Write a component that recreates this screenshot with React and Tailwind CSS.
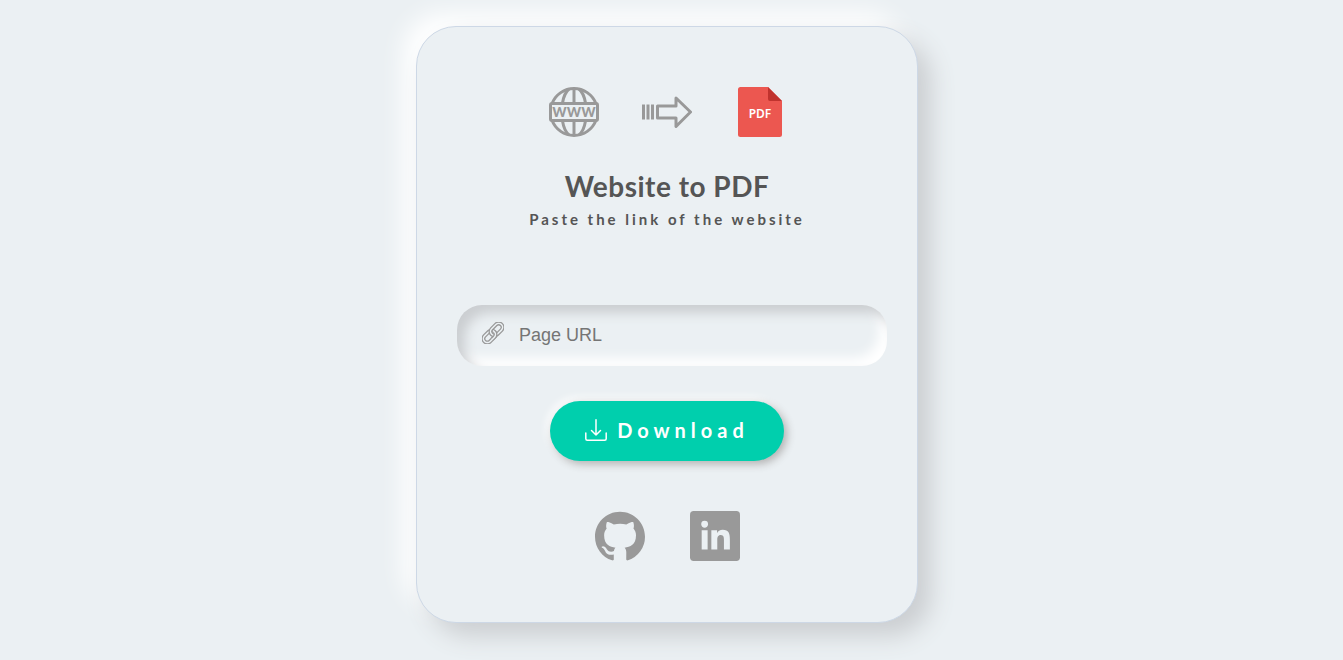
function GlobeIcon() {
  return (
    <svg viewBox="0 0 50 50" className="size-[50px]" fill="none" stroke="#999" strokeWidth="3" aria-hidden="true">
      <path d="M3.100 16.500A23.500 23.500 0 0 1 46.900 16.500M3.100 33.500A23.500 23.500 0 0 0 46.900 33.500" />
      <path d="M25 1.500V16M25 34V48.500M13.500 16C14.500 10 17 4.500 20 2M36.500 16C35.500 10 33 4.500 30 2M13.500 34C14.500 40 17 45.500 20 48M36.500 34C35.500 40 33 45.500 30 48" />
      <rect x="1.500" y="16.500" width="47" height="17" rx="1.500" />
      <text x="25" y="29.500" textAnchor="middle" fill="#999" stroke="none" className="font-[Lato,sans-serif] text-[18px] font-bold">www</text>
    </svg>
  );
}

function ArrowIcon() {
  return (
    <svg viewBox="0 0 50 50" className="size-[50px]" fill="none" stroke="#999" strokeWidth="3" aria-hidden="true">
      <path d="M1.500 17.500V32.500M6 17.500V32.500M10.500 17.500V32.500" />
      <path strokeLinejoin="round" d="M15.500 19H34V11L48.500 25L34 39.500V31H15.500Z" />
    </svg>
  );
}

function PdfIcon() {
  return (
    <svg viewBox="0 0 50 50" className="size-[50px]" aria-label="PDF" role="img">
      <path fill="#ec5750" d="M5.500 0H33L47 14V47.500A2.500 2.500 0 0 1 44.500 50H5.500A2.500 2.500 0 0 1 3 47.500V2.500A2.500 2.500 0 0 1 5.500 0Z" />
      <path fill="#c0332e" d="M33 0L47 14H35A2 2 0 0 1 33 12Z" />
      <text x="25" y="31" textAnchor="middle" fill="#fff" className="font-['Noto_Sans',sans-serif] text-[12px] font-semibold">PDF</text>
    </svg>
  );
}

function LinkIcon() {
  return (
    <svg viewBox="0 0 22 22" className="size-[22px] shrink-0" fill="none" stroke="#999" strokeWidth="1.300" aria-hidden="true">
      <defs>
        <clipPath id="link-overlap">
          <rect x="6" y="11" width="10" height="6" />
        </clipPath>
        <path
          id="chain-link"
          fill="#ebf0f3"
          fillRule="evenodd"
          d="M3 5.700H9A5.300 5.300 0 0 1 9 16.300H3A5.300 5.300 0 0 1 3 5.700ZM3 8.500H9A2.500 2.500 0 0 1 9 13.500H3A2.500 2.500 0 0 1 3 8.500Z"
        />
      </defs>
      <g transform="rotate(-45 11 11)">
        <use href="#chain-link" />
        <use href="#chain-link" x="10" />
        <g clipPath="url(#link-overlap)">
          <use href="#chain-link" />
        </g>
      </g>
    </svg>
  );
}

function DownloadIcon() {
  return (
    <svg viewBox="0 0 22 22" className="size-[22px]" fill="none" stroke="#fff" strokeWidth="1.500" strokeLinecap="round" strokeLinejoin="round" aria-hidden="true">
      <path d="M11 .8V16M6.500 11.500L11 16L15.500 11.500M.8 14V19.700Q.8 21.200 2.300 21.200H19.700Q21.200 21.200 21.200 19.700V14" />
    </svg>
  );
}

function GithubIcon() {
  return (
    <svg viewBox="0 -0.200 16 16" className="size-[50px]" fill="#999" aria-hidden="true">
      <path d="M8 0C3.580 0 0 3.580 0 8c0 3.540 2.290 6.530 5.470 7.590.4.070.55-.17.55-.38 0-.19-.01-.82-.01-1.490-2.010.37-2.530-.49-2.690-.94-.09-.23-.48-.94-.82-1.130-.28-.15-.68-.52-.01-.53.63-.01 1.080.58 1.230.82.72 1.210 1.870.87 2.330.66.07-.52.28-.87.51-1.070-1.780-.2-3.640-.89-3.640-3.950 0-.87.31-1.590.82-2.150-.08-.2-.36-1.020.08-2.120 0 0 .67-.21 2.200.82.64-.18 1.320-.27 2-.27s1.360.09 2 .27c1.530-1.040 2.200-.82 2.200-.82.44 1.100.16 1.920.08 2.120.51.56.82 1.270.82 2.150 0 3.070-1.870 3.750-3.650 3.950.29.25.54.73.54 1.480 0 1.070-.01 1.930-.01 2.200 0 .21.15.46.55.38A8.010 8.010 0 0 0 16 8c0-4.420-3.580-8-8-8z" />
    </svg>
  );
}

function LinkedinIcon() {
  return (
    <svg viewBox="0 0 50 50" className="size-[50px]" aria-hidden="true">
      <rect width="50" height="50" rx="3.700" fill="#999" />
      <path fill="#ebf0f3" transform="translate(11.200 9.800) scale(.064)" d="M100.280 448H7.400V148.900h92.880zM53.790 108.100C24.090 108.100 0 83.500 0 53.800a53.790 53.790 0 0 1 107.580 0c0 29.700-24.100 54.300-53.790 54.300zM447.900 448h-92.680V302.400c0-34.700-.7-79.200-48.290-79.200-48.290 0-55.690 37.700-55.690 76.700V448h-92.780V148.900h89.080v40.800h1.300c12.400-23.500 42.690-48.300 87.880-48.300 94 0 111.280 61.900 111.280 142.300V448z" />
    </svg>
  );
}

export default function App() {
  return (
    <main className="flex min-h-screen items-start justify-center bg-[#ebf0f3] py-[26px] pr-[9px] font-[Lato,sans-serif] text-[#555]">
      <section className="flex w-full max-w-[502px] flex-col items-center rounded-[40px] border border-[#cdd8e6] bg-[#ebf0f3] px-10 pt-[60px] pb-[61px] shadow-[13px_13px_24px_#cbced1,-13px_-13px_24px_#fff]">
        <div className="flex gap-[43px]">
          <GlobeIcon />
          <ArrowIcon />
          <PdfIcon />
        </div>
        <h1 className="mt-[31px] text-[28px] leading-9 font-bold tracking-[0.5px]">Website to PDF</h1>
        <p className="mt-[3px] text-[15px] leading-6 font-bold tracking-[3px]">Paste the link of the website</p>
        <form className="mt-[74px] flex w-full flex-col items-center" onSubmit={(e) => e.preventDefault()}>
          <div className="-mr-[10px] flex h-[61px] items-start gap-[15px] self-stretch rounded-[25px] pt-[17px] pr-5 pl-[25px] shadow-[inset_8px_8px_12px_#cbced1,inset_-8px_-8px_12px_#fff]">
            <LinkIcon />
            <input
              type="url"
              aria-label="Page URL"
              placeholder="Page URL"
              className="min-w-0 flex-1 bg-transparent font-['Liberation_Sans',sans-serif] text-[18px] leading-[26px] outline-none placeholder:text-[#757575]"
            />
          </div>
          <button
            type="submit"
            className="mt-[35px] flex h-[60px] items-center gap-[10px] rounded-[30px] bg-[#00cfad] px-[35px] pb-[2px] text-[20px] font-bold tracking-[5px] text-white shadow-[3px_3px_8px_#b1b1b1,-3px_-3px_8px_#fff]"
          >
            <DownloadIcon />
            Download
          </button>
        </form>
        <nav aria-label="Social links" className="mt-[50px] flex gap-[45px]">
          <a href="https://github.com" aria-label="GitHub"><GithubIcon /></a>
          <a href="https://www.linkedin.com" aria-label="LinkedIn"><LinkedinIcon /></a>
        </nav>
      </section>
    </main>
  );
}
